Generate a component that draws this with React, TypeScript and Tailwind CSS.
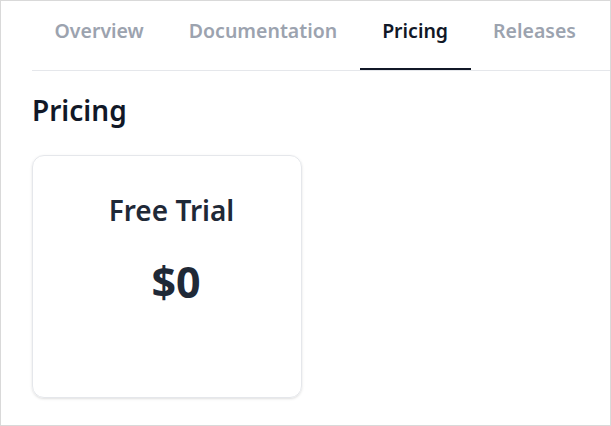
import React from "react";

const tabs = ["Overview", "Documentation", "Pricing", "Releases"];

const App = () => {
  return (
    <div
      className="h-[426px] w-[611px] overflow-hidden border border-[#d9d9d9] bg-white pl-[31px]"
      style={{ fontFamily: '"Noto Sans", "Open Sans", sans-serif' }}
    >
      <nav className="flex border-b border-[#e5e7eb] pt-[16px]">
        {tabs.map((tab) => (
          <div
            key={tab}
            className={
              tab === "Pricing"
                ? "border-b-2 border-[#111827] px-[22.5px] pb-[23px] text-[19.5px] font-semibold leading-7 text-[#111827]"
                : "border-b-2 border-transparent px-[22.5px] pb-[23px] text-[19.5px] font-semibold leading-7 text-[#9ca3af]"
            }
          >
            {tab}
          </div>
        ))}
      </nav>
      <h2 className="mt-[23px] text-[28px] font-semibold leading-8 text-[#111827]">Pricing</h2>
      <div className="mt-[29px] flex h-[243px] w-[270px] flex-col items-center rounded-xl border border-[#e5e7eb] pl-[9px] pt-[38px] shadow-sm">
        <h3 className="text-[28px] font-semibold leading-8 text-[#1f2937]">Free Trial</h3>
        <p className="ml-[9px] mt-[34px] text-[43px] font-bold leading-none text-[#1f2937]">$0</p>
      </div>
    </div>
  );
};

export default App;
